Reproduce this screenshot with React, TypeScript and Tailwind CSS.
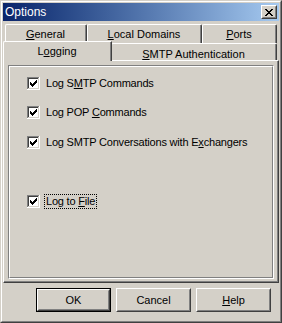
import React from 'react';

const font = { fontFamily: '"Liberation Sans", Arial, sans-serif' };

function U({ children }: { children: React.ReactNode }) {
  return <span className="underline underline-offset-[1px]">{children}</span>;
}

function Check() {
  // classic 13x13 sunken checkbox with pixel check mark
  const px: [number, number][] = [
    [9, 3], [8, 4], [9, 4], [3, 5], [7, 5], [8, 5], [9, 5],
    [3, 6], [4, 6], [6, 6], [7, 6], [8, 6], [3, 7], [4, 7], [5, 7], [6, 7], [7, 7],
    [4, 8], [5, 8], [6, 8], [5, 9],
  ];
  return (
    <svg width="13" height="13" viewBox="0 0 13 13" shapeRendering="crispEdges" className="shrink-0">
      <rect x="0" y="0" width="13" height="13" fill="#ffffff" />
      <rect x="0" y="0" width="12" height="1" fill="#808080" />
      <rect x="0" y="0" width="1" height="12" fill="#808080" />
      <rect x="1" y="1" width="10" height="1" fill="#404040" />
      <rect x="1" y="1" width="1" height="10" fill="#404040" />
      <rect x="1" y="11" width="11" height="1" fill="#d4d0c8" />
      <rect x="11" y="1" width="1" height="11" fill="#d4d0c8" />
      {px.map(([x, y], i) => (
        <rect key={i} x={x} y={y} width="1" height="1" fill="#000000" />
      ))}
    </svg>
  );
}

function CloseGlyph() {
  const rows = ['XX....XX', '.XX..XX.', '..XXXX..', '...XX...', '..XXXX..', '.XX..XX.', 'XX....XX'];
  return (
    <svg width="8" height="7" viewBox="0 0 8 7" shapeRendering="crispEdges">
      {rows.flatMap((r, y) =>
        r.split('').map((c, x) => (c === 'X' ? <rect key={`${x}-${y}`} x={x} y={y} width="1" height="1" fill="#000" /> : null))
      )}
    </svg>
  );
}

function Tab({ children, className = '' }: { children: React.ReactNode; className?: string }) {
  return (
    <div className={`border-l border-t border-white border-r border-r-[#404040] rounded-t-[2px] bg-[#d4d0c8] ${className}`}>
      <div className="h-full border-r border-[#808080] flex justify-center pt-[3px] text-[11px] leading-[13px] text-black">
        {children}
      </div>
    </div>
  );
}

function Button({ children, def = false }: { children: React.ReactNode; def?: boolean }) {
  return (
    <div className={`w-[75px] h-[24px] ${def ? 'border border-black' : ''}`}>
      <div className="h-full border border-t-white border-l-white border-r-[#404040] border-b-[#404040]">
        <div className="h-full border border-t-[#d4d0c8] border-l-[#d4d0c8] border-r-[#808080] border-b-[#808080] flex items-center justify-center text-[11px] text-black">
          {children}
        </div>
      </div>
    </div>
  );
}

function Row({ children, className = '', focus = false }: { children: React.ReactNode; className?: string; focus?: boolean }) {
  return (
    <div className={`flex items-center gap-[5px] ${className}`}>
      <Check />
      <span className={`text-[11px] leading-[13px] tracking-[-0.2px] text-black px-[1px] ${focus ? 'outline outline-1 outline-dotted outline-black' : ''}`}>
        {children}
      </span>
    </div>
  );
}

export default function App() {
  return (
    <div className="w-[282px] h-[323px] bg-[#d4d0c8] select-none" style={font}>
      <div className="w-full h-full border border-t-[#d4d0c8] border-l-[#d4d0c8] border-r-[#404040] border-b-[#404040]">
        <div className="w-full h-full border border-t-white border-l-white border-r-[#808080] border-b-[#808080] p-[1px] flex flex-col">
          {/* title bar */}
          <div className="h-[18px] bg-gradient-to-r from-[#0a246a] to-[#a6caf0] flex items-center pl-[2px] pr-[2px]">
            <span className="text-white text-[12px] flex-1">Options</span>
            <div className="w-[16px] h-[14px] bg-[#d4d0c8] border border-t-white border-l-white border-r-[#404040] border-b-[#404040]">
              <div className="h-full border border-t-[#d4d0c8] border-l-[#d4d0c8] border-r-[#808080] border-b-[#808080] flex items-center justify-center">
                <CloseGlyph />
              </div>
            </div>
          </div>

          {/* tab rows */}
          <div className="flex pl-[2px] mt-[3px] h-[19px]">
            <Tab className="w-[82px]">
              <span><U>G</U>eneral</span>
            </Tab>
            <Tab className="w-[115px]">
              <span><U>L</U>ocal Domains</span>
            </Tab>
            <Tab className="w-[75px]">
              <span><U>P</U>orts</span>
            </Tab>
          </div>
          <div className="flex h-[17px] items-start">
            <Tab className="w-[109px] h-[20px] -mt-[2px] relative z-10 rounded-tr-none">
              <span>L<U>o</U>gging</span>
            </Tab>
            <Tab className="w-[166px] h-[17px] -ml-[1px]">
              <span className="pt-[1px]"><U>S</U>MTP Authentication</span>
            </Tab>
          </div>

          {/* panel */}
          <div className="w-[276px] h-[223px] border border-t-white border-l-white border-r-[#404040] border-b-[#404040]">
            <div className="h-full border-r border-b border-[#808080] pl-[4px] pt-[4px] pr-[3px] pb-[2px]">
              <div className="h-full border border-t-[#808080] border-l-[#808080] border-r-white border-b-white">
                <div className="h-full border border-t-white border-l-white border-r-[#808080] border-b-[#808080] pl-[17px] pt-[10px] flex flex-col">
                  <Row>Log S<U>M</U>TP Commands</Row>
                  <Row className="mt-[16px]">Log POP <U>C</U>ommands</Row>
                  <Row className="mt-[17px]">Log SMTP Conversations with E<U>x</U>changers</Row>
                  <Row className="mt-[46px]" focus>Log to <U>F</U>ile</Row>
                </div>
              </div>
            </div>
          </div>

          {/* buttons */}
          <div className="flex justify-end gap-[5px] pr-[8px] mt-[5px]">
            <Button def>OK</Button>
            <Button>Cancel</Button>
            <Button><U>H</U>elp</Button>
          </div>
        </div>
      </div>
    </div>
  );
}
